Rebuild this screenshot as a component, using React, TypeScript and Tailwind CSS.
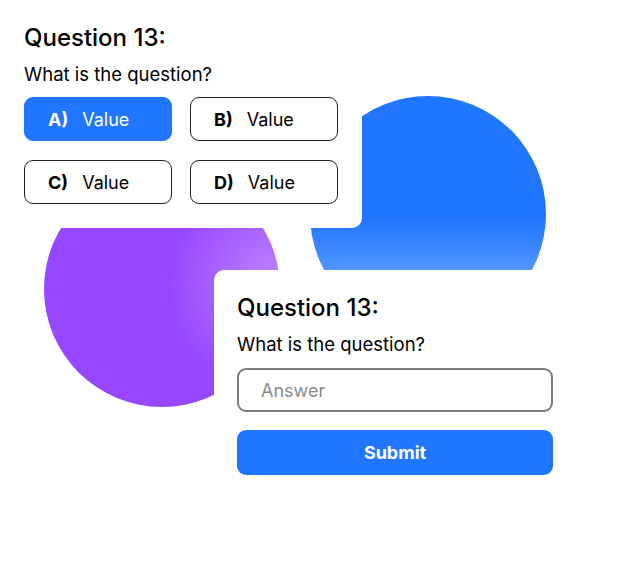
import { useState } from 'react';

const options = [
  { key: 'A', label: 'Value', active: true },
  { key: 'B', label: 'Value', active: false },
  { key: 'C', label: 'Value', active: false },
  { key: 'D', label: 'Value', active: false },
];

const QuestionHeader = () => (
  <>
    <h2 className="text-[24px] leading-[29px] font-medium text-black">Question 13:</h2>
    <p className="mt-[11px] text-[18.5px] leading-[22px] text-black">What is the question?</p>
  </>
);

export default function App() {
  const [answer, setAnswer] = useState('');

  return (
    <div className="relative w-full h-[568px] bg-white overflow-hidden font-['Inter',sans-serif]">
      {/* decorative circles */}
      <div className="absolute left-[310px] top-[96px] w-[236px] h-[236px] rounded-full bg-[linear-gradient(to_bottom,#2176ff_52%,#8ab8ff_100%)]" />
      <div className="absolute left-[44px] top-[171px] w-[236px] h-[236px] rounded-full bg-[radial-gradient(circle_at_100%_48%,#bf86ff_0%,#9747ff_42%)]" />

      {/* Multiple choice card */}
      <div className="relative z-10 w-[362px] bg-white rounded-br-[10px] px-6 pt-[23px] pb-6">
        <QuestionHeader />
        <div className="mt-[12px] grid grid-cols-2 gap-x-[18px] gap-y-[19px]">
          {options.map((o) => (
            <button
              key={o.key}
              className={
                o.active
                  ? 'h-[44px] rounded-[9px] bg-[#2176ff] border border-[#2176ff] text-white flex items-center pl-[23px] gap-[14px] text-[18px]'
                  : 'h-[44px] rounded-[9px] bg-white border border-[#1f1f1f] text-black flex items-center pl-[23px] gap-[14px] text-[18px]'
              }
            >
              <span className="font-bold">{o.key})</span>
              <span>{o.label}</span>
            </button>
          ))}
        </div>
      </div>

      {/* Free answer card */}
      <div className="relative z-10 ml-[214px] mt-[42px] w-[362px] bg-white rounded-[10px] pl-[23px] pr-[23px] pt-[23px] pb-6">
        <QuestionHeader />
        <input
          value={answer}
          onChange={(e) => setAnswer(e.target.value)}
          placeholder="Answer"
          className="mt-[13px] block w-full h-[44px] rounded-[9px] border-2 border-[#7a7a7a] pl-[22px] text-[18px] text-black placeholder:text-[#8a8a8a] outline-none"
        />
        <button className="mt-[18px] w-full h-[45px] rounded-[9px] bg-[#2176ff] text-white text-[18px] font-bold">
          Submit
        </button>
      </div>
    </div>
  );
}
